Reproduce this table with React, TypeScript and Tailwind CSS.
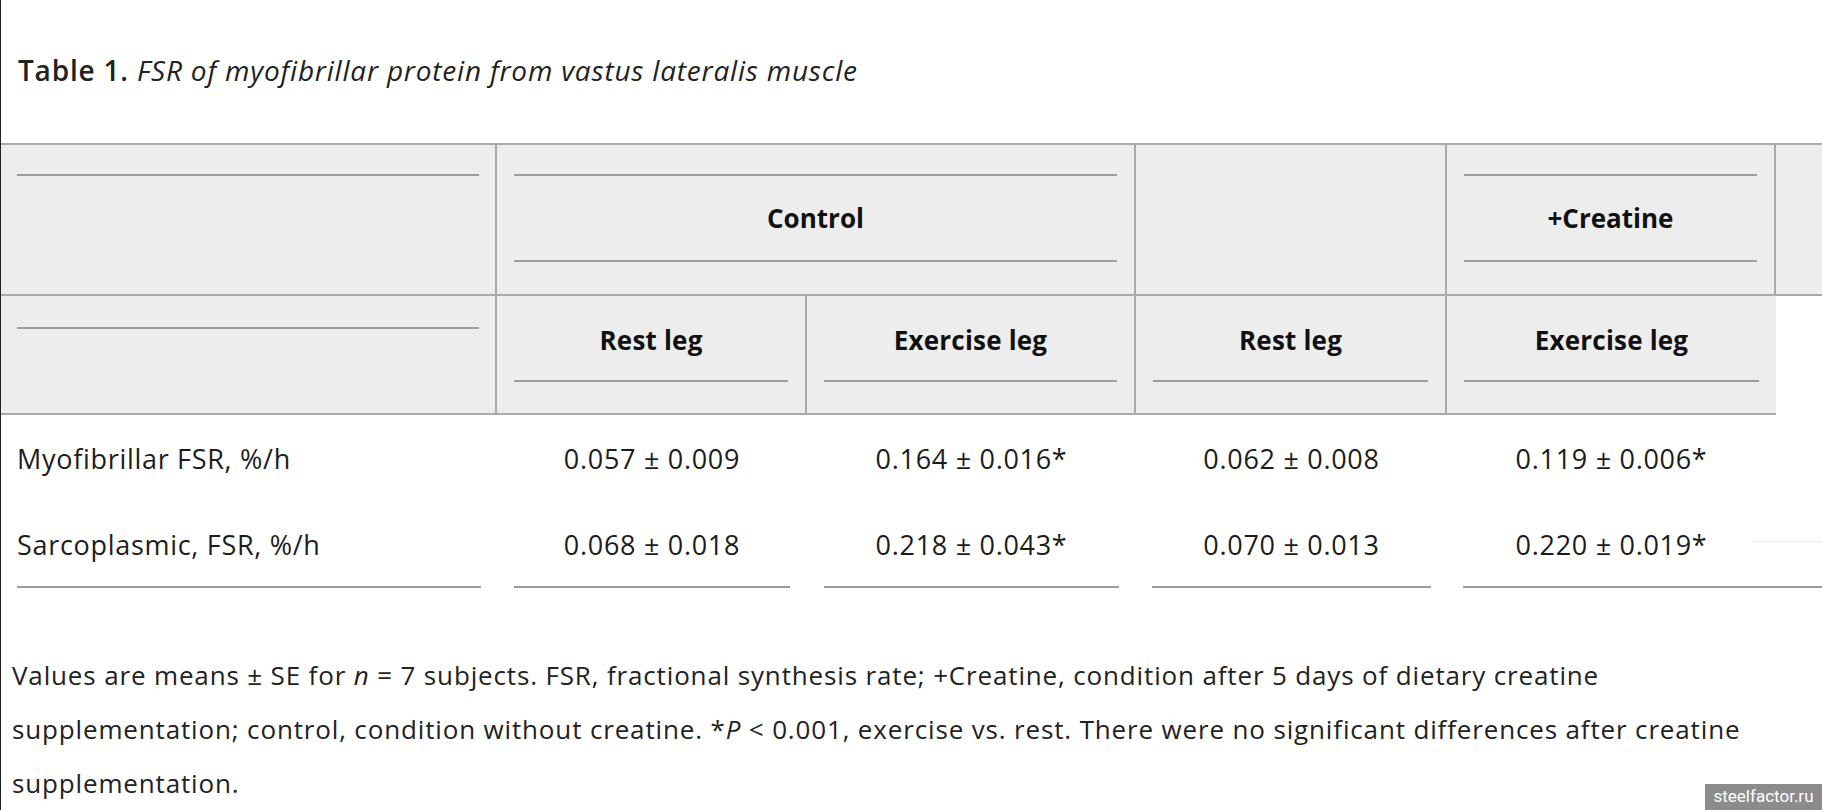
import React from "react";

const W = ["w-[496px]", "w-[310px]", "w-[329px]", "w-[311px]", "w-[329px]"];

function Line() {
  return <div className="h-[2px] bg-[#9c9c9c]" />;
}

export default function App() {
  const body = [
    ["Myofibrillar FSR, %/h", "0.057 ± 0.009", "0.164 ± 0.016*", "0.062 ± 0.008", "0.119 ± 0.006*"],
    ["Sarcoplasmic, FSR, %/h", "0.068 ± 0.018", "0.218 ± 0.043*", "0.070 ± 0.013", "0.220 ± 0.019*"],
  ];
  return (
    <div className="relative h-[810px] w-[1822px] overflow-hidden border-l border-[#222] bg-white font-['Open_Sans',Lato,sans-serif] text-[#1a1a1a]">
      <div className="pl-[17px] pt-[52px] text-[28px] leading-[36px] tracking-[0.8px] text-[#222]">
        <span className="font-semibold">Table 1.</span>{" "}
        <span className="italic">FSR of myofibrillar protein from vastus lateralis muscle</span>
      </div>

      <div className="mt-[55px]">
        {/* header row 1 */}
        <div className="flex h-[153px] border-y-2 border-[#aaa] bg-[#ededed]">
          <div className="w-[496px] border-r-2 border-[#aaa] px-[16px] pt-[29px]">
            <Line />
          </div>
          <div className="w-[639px] border-r-2 border-[#aaa] px-[17px] pt-[29px]">
            <div className="border-y-2 border-[#9c9c9c] py-[24px] text-center text-[26px] font-bold leading-[36px] text-[#111]">
              Control
            </div>
          </div>
          <div className="w-[311px] border-r-2 border-[#aaa]" />
          <div className="w-[329px] border-r-2 border-[#aaa] px-[17px] pt-[29px]">
            <div className="border-y-2 border-[#9c9c9c] py-[24px] text-center text-[26px] font-bold leading-[36px] text-[#111]">
              +Creatine
            </div>
          </div>
          <div className="flex-1" />
        </div>

        {/* header row 2 */}
        <div className="flex h-[119px] w-[1775px] border-b-2 border-[#aaa] bg-[#ededed]">
          <div className="w-[496px] border-r-2 border-[#aaa] px-[16px] pt-[31px]">
            <Line />
          </div>
          {["Rest leg", "Exercise leg", "Rest leg", "Exercise leg"].map((t, i) => (
            <div
              key={i}
              className={`${W[i + 1]} ${i < 3 ? "border-r-2 border-[#aaa]" : ""} px-[17px] pt-[26px]`}
            >
              <div className="text-center text-[26px] font-bold leading-[36px] tracking-[0.2px] text-[#111]">{t}</div>
              <div className="mt-[22px]">
                <Line />
              </div>
            </div>
          ))}
        </div>

        {/* body */}
        <div className="relative pt-[26px] text-[27px] leading-[36px] tracking-[0.7px] text-[#1c1c1c]">
          {body.map((r, ri) => (
            <div key={ri} className={`flex ${ri === 1 ? "mt-[50px]" : ""}`}>
              {r.map((c, ci) => (
                <div
                  key={ci}
                  className={`${W[ci]} ${ci === 0 ? "pl-[16px] text-left" : "text-center"}`}
                >
                  {c}
                </div>
              ))}
            </div>
          ))}
          <div className="absolute right-0 top-[126px] h-px w-[70px] bg-[#eeeeee]" />
          <div className="mt-[23px] flex">
            <div className="w-[496px] px-[16px]">
              <Line />
            </div>
            <div className="w-[310px] px-[17px]">
              <Line />
            </div>
            <div className="w-[329px] px-[17px]">
              <Line />
            </div>
            <div className="w-[311px] px-[16px]">
              <Line />
            </div>
            <div className="flex-1 pl-[16px]">
              <Line />
            </div>
          </div>
        </div>

        {/* footnote */}
        <div className="mt-[60px] pl-[11px] text-[26px] leading-[54px] tracking-[0.85px] text-[#222]">
          Values are means ± SE for <i>n</i> = 7 subjects. FSR, fractional synthesis rate; +Creatine, condition after 5 days of dietary creatine
          <br />
          supplementation; control, condition without creatine. *<i>P</i> &lt; 0.001, exercise vs. rest. There were no significant differences after creatine
          <br />
          supplementation.
        </div>
      </div>

      <div className="absolute bottom-0 right-0 flex h-[26px] w-[117px] items-center justify-center bg-[#8c8c8c] font-[Roboto,sans-serif] text-[17px] text-white">
        steelfactor.ru
      </div>
    </div>
  );
}
